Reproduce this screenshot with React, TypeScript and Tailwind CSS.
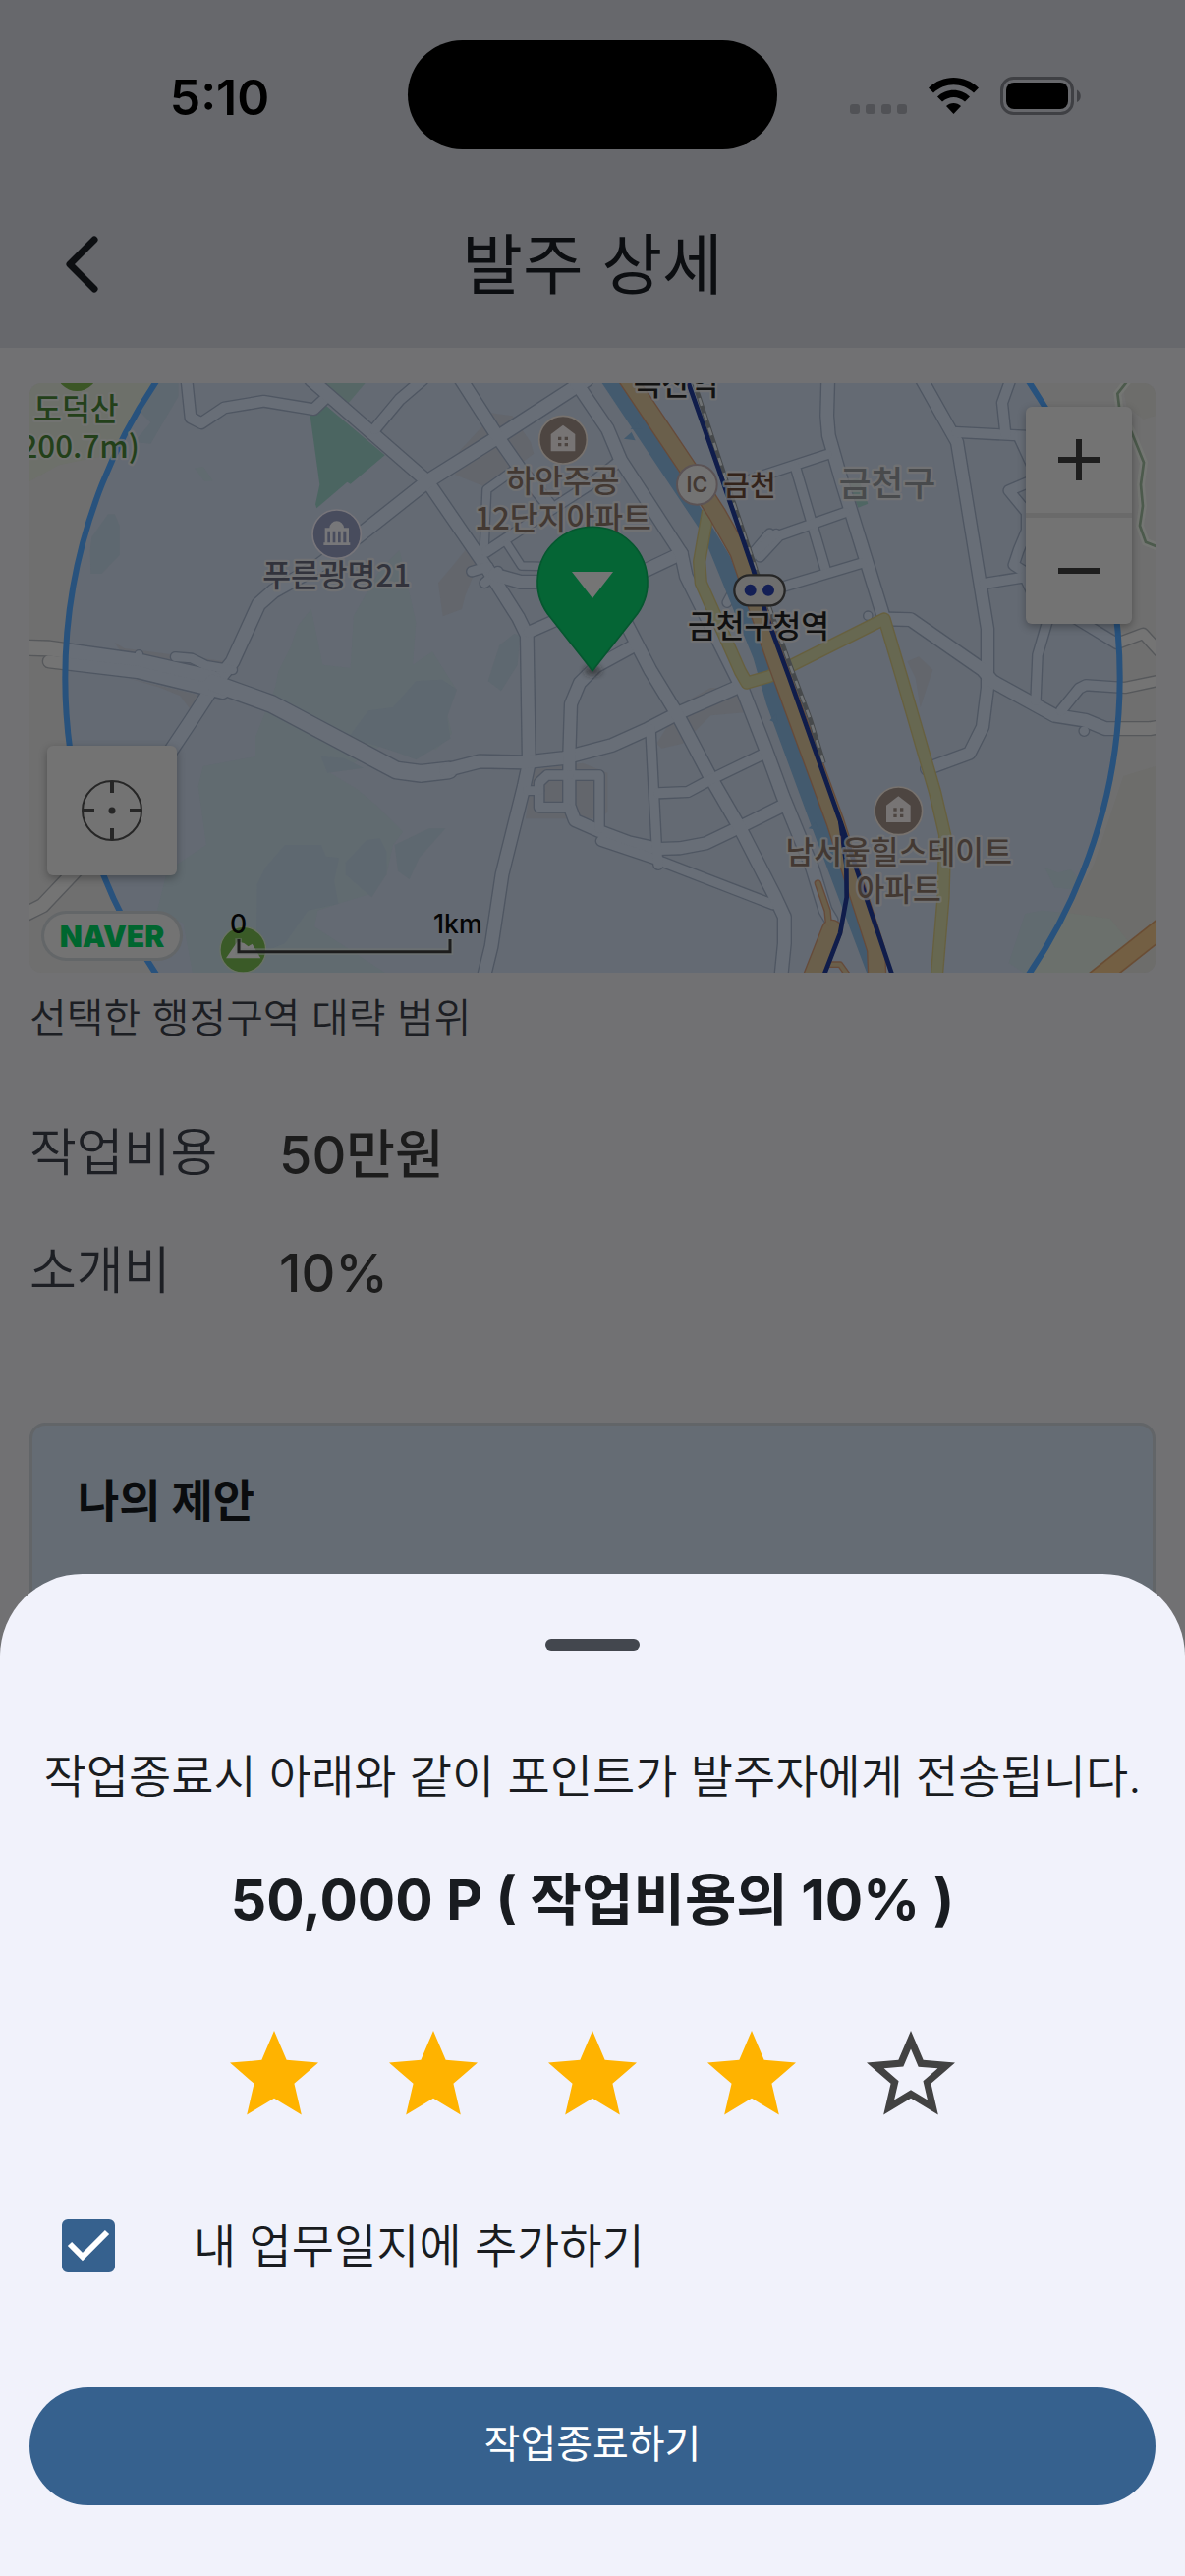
import { useState } from "react";

type Road = { d: string; w: number };

const streets: Road[] = [
  { d: "M480 20 492 135 525 152 595 105 715 85 868 110 905 75", w: 32 },
  { d: "M860 20 1215 330 1400 600 1492 745 1519 800 1521 930 1525 1190 1510 1260 1443 1530 1410 1750 1388 1840", w: 38 },
  { d: "M1200 20 1130 80 1055 170", w: 32 },
  { d: "M1700 20 1430 195 1215 330 1000 500 880 590 745 665 700 705 620 880 565 950 490 1065 390 1215 250 1400 130 1530 40 1625 -10 1650", w: 40 },
  { d: "M-10 838 60 840 330 878 560 930", w: 44 },
  { d: "M60 880 330 912 590 975", w: 36 },
  { d: "M445 866 495 870 540 892 620 905", w: 26 },
  { d: "M560 945 740 1010 1120 1212 1195 1222 1280 1212", w: 50 },
  { d: "M1270 1212 1375 1185 1510 1188 1630 1175 1780 1135 1890 1085 1980 1038 2180 950", w: 38 },
  { d: "M1318 20 1437 205 1500 295 1585 400", w: 38 },
  { d: "M1388 540 1396 355 1475 298", w: 24 },
  { d: "M1395 545 1455 505 1710 340 1805 265", w: 30 },
  { d: "M1458 520 1502 588 1600 590", w: 22 },
  { d: "M1350 605 1400 590", w: 28 },
  { d: "M1390 640 1430 605", w: 28 },
  { d: "M1420 615 1500 637 1560 637 1800 640 1990 550", w: 38 },
  { d: "M1525 790 1620 748", w: 34 },
  { d: "M1840 835 1730 895 1680 945 1653 1010 1648 1165 1648 1320 1665 1365 1740 1398 1830 1432 1920 1452 1985 1450 2065 1435 2170 1385 2310 1315", w: 36 },
  { d: "M1648 1227 1740 1227 1740 1390", w: 28 },
  { d: "M1648 1227 1580 1227 1556 1250 1556 1325 1640 1325", w: 28 },
  { d: "M1520 1274 1556 1274", w: 26 },
  { d: "M1745 1428 1915 1485 2270 1622", w: 28 },
  { d: "M1896 1085 1915 1450 1920 1500", w: 28 },
  { d: "M1820 760 1895 905 1980 1045 2080 1235 2170 1390 2275 1595 2305 1660 2305 1740 2295 1840", w: 38 },
  { d: "M1920 1282 2010 1278 2075 1243 2250 1158", w: 30 },
  { d: "M1670 30 1765 170 1805 265 1990 550 2005 620 2175 960 2245 1140 2300 1290 2390 1510 2430 1640 2448 1670", w: 38 },
  { d: "M2438 20 2435 130 2440 190 2480 330 2605 735", w: 38 },
  { d: "M2200 325 2435 248", w: 28 },
  { d: "M2338 285 2432 605", w: 28 },
  { d: "M2230 560 2290 495 2490 425", w: 28 },
  { d: "M2300 652 2540 580", w: 28 },
  { d: "M2200 560 2260 490", w: 28 },
  { d: "M2130 700 2210 550 2280 490", w: 26 },
  { d: "M2725 20 2832 210 2925 780 2925 960 2910 1080 2870 1160 2740 1208", w: 36 },
  { d: "M2830 180 3060 192", w: 30 },
  { d: "M2995 20 2970 90 2980 185", w: 30 },
  { d: "M3020 192 3065 290", w: 30 },
  { d: "M3080 320 2990 358 3045 425 3045 480 3020 540 3005 585 3060 620", w: 30 },
  { d: "M2915 642 3040 622 3085 720", w: 30 },
  { d: "M2620 750 2690 752 2910 905 2940 940 3130 1045 3225 1060 3285 1085 3420 1085 3450 1080", w: 38 },
  { d: "M3110 750 3078 860 3072 1000", w: 28 },
  { d: "M3150 1030 3205 962 3225 952 3345 960 3450 938", w: 30 },
  { d: "M3180 740 3320 825 3400 795 3450 850", w: 30 },
];

const cityPatches = [
  "M1310 240 1380 165 1405 120 1475 130 1530 210 1540 245 1500 275 1450 310 1400 350 1300 310Z",
  "M1248 640 1290 590 1335 535 1370 580 1330 680 1320 720 1262 742Z",
  "M1515 1360 1535 1210 1690 1190 1765 1220 1765 1340 1740 1360Z",
  "M1915 1130 1990 1010 2080 960 2180 960 2190 1035 2080 1045 1995 1130 1930 1145Z",
  "M2680 880 2715 865 2758 905 2720 1020 2705 930Z",
  "M260 822 290 840 600 880 640 900 520 940 330 930ZM300 930 400 960 460 985 490 1025 530 985Z",
];

const hills = [
  "M860 720 820 770 800 830 760 910 750 960 690 1110 690 1170 530 1200 515 1260 540 1440 480 1480 420 1520 390 1640 470 1680 500 1840 1100 1840 870 1690 880 1640 940 1620 1040 1590 1090 1530 1110 1440 1140 1400 1060 1320 1000 1270 900 1210 990 1190 1130 1100 1240 1150 1290 1100 1270 1020 1300 960 1230 850 1170 890 1180 760 1130 540 1070 600 990 740 980 900 895 890Z",
  "M505 290 530 285 560 328 535 330Z",
  "M3050 1840 2990 1800 3040 1650 3090 1640 3190 1650 3300 1665 3390 1780 3300 1840Z",
  "M3100 1510 3140 1525 3180 1515 3210 1550 3180 1575 3130 1570Z",
];

const darkHills = [
  "M185 540 190 500 240 430 260 430 275 465 275 555 220 612 187 612Z",
  "M370 150 330 110 385 30 455 30 455 70 370 215 320 210Z",
  "M695 1560 720 1510 780 1440 890 1440 905 1475 945 1480 930 1550 943 1620 850 1640 780 1740 720 1765 693 1740Z",
  "M965 1495 1030 1425 1070 1420 1090 1460 1090 1530 1045 1600 965 1530Z",
  "M1115 1440 1220 1390 1270 1390 1190 1480 1160 1545 1125 1520Z",
  "M975 1110 1035 1030 1110 1020 1180 940 1260 935 1305 965 1275 1050 1285 1115 1180 1180 1130 1160Z",
  "M890 1170 960 1175 1020 1205 910 1220Z",
  "M1400 940 1435 830 1480 795 1498 800 1490 890 1440 970Z",
];

function Streets() {
  return (
    <g fill="none" strokeLinejoin="round" strokeLinecap="round">
      {streets.map((r) => (
        <path key={r.d} d={r.d} stroke="#56585b" strokeWidth={r.w + 8} />
      ))}
      <circle cx="334" cy="858" r="13" fill="#747474" stroke="#56585b" strokeWidth="4" />
      <circle cx="2560" cy="740" r="14" fill="#747474" stroke="#56585b" strokeWidth="4" />
      <circle cx="3220" cy="1092" r="16" fill="#747474" stroke="#56585b" strokeWidth="4" />
      {streets.map((r) => (
        <path key={r.d} d={r.d} stroke="#747474" strokeWidth={r.w} />
      ))}
    </g>
  );
}

function HousePin({ x, y }: { x: number; y: number }) {
  return (
    <g transform={`translate(${x} ${y})`}>
      <circle r="73" fill="#4d4541" stroke="#77726e" strokeWidth="5" />
      <path d="M-37 35V-17L0 -45 37 -17V35Z" fill="#777474" />
      <path d="M-15 -9h10v10h-10zM5 -9h10v10h-10zM-15 10h10v10h-10zM5 10h10v10h-10z" fill="#4d4541" />
    </g>
  );
}

function MapDrawing() {
  return (
    <svg viewBox="0 30 3438 1800" preserveAspectRatio="xMidYMid slice" className="block h-[600px] w-full" role="img" aria-label="선택한 행정구역 지도">
      <defs>
        <filter id="pinShadow" x="-50%" y="-50%" width="200%" height="200%">
          <feGaussianBlur stdDeviation="9" />
        </filter>
      </defs>
      <rect x="-200" y="0" width="3900" height="1900" fill="#6f6f6f" />
      <path d="M0 0H400L300 160 240 250 90 280 0 330Z" fill="#6d706a" />
      <path d="M3330 0H3438V130L3400 140 3350 100ZM3340 1230 3438 1200V1830H3050L3250 1500Z" fill="#6d6d6b" />
      {cityPatches.map((d) => (
        <path key={d} d={d} fill="#6e6a67" />
      ))}
      {hills.map((d) => (
        <path key={d} d={d} fill="#6b706c" />
      ))}
      {darkHills.map((d) => (
        <path key={d} d={d} fill="#686d6b" />
      ))}
      <path d="M857 130 905 98 1085 250 980 338 970 332 877 412 873 400 886 340Z" fill="#52695a" />
      <path d="M895 30H1025L970 95Z" fill="#5f6c60" />
      <path d="M2500 330 2530 320 2560 398 2530 410Z" fill="#566a5c" />
      <Streets />
      <circle cx="1719" cy="930" r="1610" fill="#2a508a" fillOpacity="0.15" />

      <path d="M1728 0 2055 490 2210 870 2250 1010 2390 1390 2560 1840H2610L2460 1450 2290 960 2140 560 1800 0Z" fill="#435a6e" />
      <path d="M1835 170 1855 148 1870 170ZM1815 200 1838 180 1850 205ZM2260 1060 2280 1040 2285 1070ZM2378 1390 2400 1370 2410 1395Z" fill="#435a6e" />

      <g fill="none" strokeLinejoin="round">
        <path d="M2072 420 2045 575 2050 640 2170 910 2190 945 2260 925 2330 890 2610 750 2665 935 2765 1280 2795 1410 2790 1600 2770 1840" stroke="#67603f" strokeWidth="40" />
        <path d="M2072 420 2045 575 2050 640 2170 910 2190 945 2260 925 2330 890 2610 750 2665 935 2765 1280 2795 1410 2790 1600 2770 1840" stroke="#676851" strokeWidth="32" />
        <path d="M1815 0 2010 290 2100 430 2165 545 2280 880 2460 1370 2585 1760 2588 1840" stroke="#664b3a" strokeWidth="58" />
        <path d="M2395 1840 2450 1700" stroke="#664b3a" strokeWidth="66" strokeLinecap="round" />
        <path d="M2440 1680 2436 1640 2407 1557" stroke="#664b3a" strokeWidth="22" strokeLinecap="round" />
        <path d="M2440 1805 2475 1805 2500 1840" stroke="#664b3a" strokeWidth="20" />
        <path d="M1815 0 2010 290 2100 430 2165 545 2280 880 2460 1370 2585 1760 2588 1840" stroke="#6a5f4b" strokeWidth="50" />
        <path d="M2395 1840 2450 1700" stroke="#6a5f4b" strokeWidth="58" strokeLinecap="round" />
        <path d="M2440 1680 2436 1640 2407 1557" stroke="#6a5f4b" strokeWidth="14" strokeLinecap="round" />
        <path d="M2440 1805 2475 1805 2500 1840" stroke="#6a5f4b" strokeWidth="12" />
        <path d="M3480 1675 3240 1865" stroke="#6a4d34" strokeWidth="62" />
        <path d="M3480 1675 3240 1865" stroke="#735f43" strokeWidth="52" />
        <path d="M2030 30 2115 290 2218 600 2318 880 2385 1060 2425 1190" stroke="#46494b" strokeWidth="14" />
        <path d="M2030 30 2115 290 2218 600 2318 880 2385 1060 2425 1190" stroke="#6f7274" strokeWidth="8" strokeDasharray="24 24" />
        <path d="M2012 30 2110 310 2210 600 2250 740 2320 930 2480 1380 2635 1840" stroke="#101d4b" strokeWidth="14" />
        <path d="M2476 1370 2494 1500 2495 1600 2475 1710 2425 1840" stroke="#101d4b" strokeWidth="14" />
      </g>
      <path d="M3355 20 3322 62 3328 110 3365 180 3402 272 3393 340 3399 405 3390 465 3408 515 3445 530" fill="none" stroke="#747673" strokeWidth="24" />
      <path d="M3355 20 3322 62 3328 110 3365 180 3402 272 3393 340 3399 405 3390 465 3408 515 3445 530" fill="none" stroke="#4c5a4c" strokeWidth="8" />
      <circle cx="1719" cy="930" r="1610" fill="none" stroke="#28527d" strokeWidth="18" />

      <circle cx="145" cy="-10" r="64" fill="#3b5626" />
      <circle cx="938" cy="491" r="74" fill="#484c5d" stroke="#77757a" strokeWidth="5" />
      <path d="M898 517h81v8h-81zM902 472h73v10h-73zM916 472a22 21 0 0 1 44 0zM902 480h8v37h-8zM918 480h8v37h-8zM934 480h8v37h-8zM950 480h8v37h-8zM967 480h8v37h-8z" fill="#777779" />
      <HousePin x={1629} y={203} />
      <HousePin x={2653} y={1336} />

      <g
        fontFamily="'Noto Sans CJK KR', sans-serif"
        fontSize="94"
        fontWeight="500"
        textAnchor="middle"
        stroke="#747474"
        strokeOpacity="0.75"
        strokeWidth="14"
        strokeLinejoin="round"
        style={{ paintOrder: "stroke" }}
      >
        <text x="142" y="144" fill="#23401a">도덕산</text>
        <text x="137" y="258" fill="#23401a">(200.7m)</text>
        <text x="938" y="652" fill="#32333c">푸른광명21</text>
        <text x="1629" y="364" fill="#433933">하안주공</text>
        <text x="1629" y="477" fill="#433933">12단지아파트</text>
        <text x="1974" y="66" fill="#121212">독산역</text>
        <text x="2199" y="375" fontSize="87" fill="#33231a">금천</text>
        <text x="2619" y="376" fontSize="107" fill="#484a4c">금천구</text>
        <text x="2226" y="808" fill="#101010">금천구청역</text>
        <text x="2654" y="1497" fill="#433933">남서울힐스테이트</text>
        <text x="2654" y="1610" fill="#433933">아파트</text>
      </g>

      <circle cx="2038" cy="340" r="61" fill="#737373" stroke="#5b5355" strokeWidth="6" />
      <text x="2038" y="363" fontFamily="Inter, sans-serif" fontSize="64" fontWeight="600" textAnchor="middle" fill="#433933">IC</text>

      <rect x="2152" y="616" width="154" height="93" rx="46" fill="#6e6e6e" stroke="#262626" strokeWidth="7" />
      <circle cx="2201" cy="662" r="18" fill="#141f55" />
      <circle cx="2256" cy="662" r="18" fill="#141f55" />

      <ellipse cx="1720" cy="908" rx="26" ry="13" fill="#222" fillOpacity="0.7" filter="url(#pinShadow)" />
      <path d="M1719 908 1582 734A168 168 0 1 1 1856 734Z" fill="#056535" stroke="#05572f" strokeWidth="5" strokeLinejoin="round" />
      <path d="M1656 606H1782L1719 687Z" fill="#757575" />

      <circle cx="652" cy="1760" r="70" fill="#3a5a27" stroke="#697265" strokeWidth="4" />
      <path d="M600 1786 635 1735 655 1740 668 1750 680 1742 706 1786Z" fill="#777" />
      <path d="M638 1726V1766H1284V1726" fill="none" stroke="#6f7472" strokeWidth="20" strokeOpacity="0.6" />
      <path d="M639 1728V1766H1284V1728" fill="none" stroke="#1d1d1d" strokeWidth="9" />
      <g fontFamily="Inter, sans-serif" fontSize="80" fontWeight="500" fill="#050505">
        <text x="638" y="1711" textAnchor="middle">0</text>
        <text x="1382" y="1711" textAnchor="end">1km</text>
      </g>
    </svg>
  );
}

function StatusBar() {
  return (
    <div className="grid grid-cols-[1fr_376px_1fr] items-center pt-[41px]">
      <span className="pt-1 pl-8 text-center font-[Inter,sans-serif] text-[50px] leading-none font-semibold text-black">5:10</span>
      <div className="h-[111px] rounded-full bg-black" />
      <div className="flex items-center pl-[74px]">
        <svg viewBox="0 0 235 40" className="h-10 w-[235px]" aria-hidden="true">
          <g fill="#515256">
            <rect x="0" y="29" width="10" height="10" rx="3" />
            <rect x="16" y="29" width="10" height="10" rx="3" />
            <rect x="32" y="29" width="10" height="10" rx="3" />
            <rect x="48" y="29" width="10" height="10" rx="3" />
          </g>
          <path d="M80 12.500C94 -1.500 117 -1.500 131 12.500L126 17.500C114 6.500 97 6.500 85 17.500ZM89 21.500C98 12.500 113 12.500 122 21.500L117 26.500C110 20.500 101 20.500 94 26.500ZM98 31C102 27 109 27 113 31L105.500 39Z" fill="#000" />
          <rect x="154.500" y="2.500" width="72" height="36" rx="12" fill="none" stroke="#3f4044" strokeWidth="3" />
          <rect x="159" y="7" width="63" height="27" rx="8" fill="#000" />
          <path d="M231 14.500C236 17 236 25 231 27Z" fill="#3f4044" />
        </svg>
      </div>
    </div>
  );
}

const STAR = "M12 17.27 18.18 21l-1.640-7.030L22 9.240l-7.190-.610L12 2 9.190 8.630 2 9.240l5.460 4.730L5.820 21z";
const STAR_OUTLINE =
  "M22 9.240l-7.190-.620L12 2 9.190 8.630 2 9.240l5.460 4.730L5.820 21 12 17.270 18.180 21l-1.630-7.030L22 9.240zM12 15.400l-3.760 2.270 1-4.280-3.320-2.880 4.380-.380L12 6.100l1.710 4.040 4.380.380-3.320 2.880 1 4.280L12 15.400z";

const details = [
  { label: "작업비용", value: "50만원" },
  { label: "소개비", value: "10%" },
];

export default function App() {
  const [rating, setRating] = useState(4);
  const [checked, setChecked] = useState(true);

  return (
    <div className="min-h-screen bg-[#717173] font-[Inter,'Noto_Sans_CJK_KR',sans-serif] text-[#191c20]">
      <header className="h-[354px] bg-[#67686c]">
        <StatusBar />
        <div className="grid grid-cols-[180px_1fr_180px] items-center pt-[70px]">
          <button type="button" aria-label="뒤로" className="ml-12 flex size-[72px] items-center justify-center">
            <svg viewBox="0 0 72 72" className="size-[72px]" fill="none" stroke="#0d0f12" strokeWidth="7" strokeLinecap="round" strokeLinejoin="round">
              <path d="M48 10 23 35 48 60" />
            </svg>
          </button>
          <h1 className="text-center text-[67px] leading-24 font-normal text-[#0c0e11]">발주 상세</h1>
        </div>
      </header>

      <main className="px-[30px] pt-9">
        <div className="relative overflow-hidden rounded-xl">
          <MapDrawing />
          <div className="absolute top-6 right-6 flex w-[108px] flex-col rounded-md bg-[#737373] shadow-[0_3px_9px_rgba(0,0,0,0.3)]">
            <button type="button" aria-label="확대" className="flex h-[108px] items-center justify-center">
              <svg viewBox="0 0 42 42" className="size-[42px]" stroke="#1e1e1e" strokeWidth="6">
                <path d="M21 0V42M0 21H42" />
              </svg>
            </button>
            <div className="h-[5px] bg-[#6a6a6a]" />
            <button type="button" aria-label="축소" className="flex h-[108px] items-center justify-center">
              <svg viewBox="0 0 42 42" className="size-[42px]" stroke="#1e1e1e" strokeWidth="6">
                <path d="M0 21H42" />
              </svg>
            </button>
          </div>
          <div className="absolute bottom-[15px] left-[15px] flex flex-col items-start gap-[39px]">
            <button type="button" aria-label="현재 위치" className="ml-[3px] flex size-[132px] items-center justify-center rounded-md bg-[#737373] shadow-[0_3px_9px_rgba(0,0,0,0.3)]">
              <svg viewBox="0 0 62 62" className="size-[62px]" fill="none" stroke="#262626">
                <circle cx="31" cy="31" r="30" strokeWidth="2" />
                <path d="M31 2V13M31 49V60M2 31H13M49 31H60" strokeWidth="4" />
                <circle cx="31" cy="31" r="3.500" fill="#262626" stroke="none" />
              </svg>
            </button>
            <span className="flex h-[45px] w-[138px] items-center justify-center rounded-full bg-[#737373] text-[30px] leading-none font-black text-[#00662f] ring-3 ring-[#636668]">
              NAVER
            </span>
          </div>
        </div>

        <p className="mt-[14px] text-[41px] leading-16 font-[350] text-[#1c1e23]">선택한 행정구역 대략 범위</p>

        <dl className="mt-16 flex flex-col gap-9">
          {details.map((row) => (
            <div key={row.label} className="grid grid-cols-[254px_1fr] items-center">
              <dt className="text-[52px] leading-20 font-[350] text-[#1d1f24]">{row.label}</dt>
              <dd className="pt-1 text-[54px] leading-20 font-medium text-[#1c1c1c]">{row.value}</dd>
            </div>
          ))}
        </dl>

        <section className="mt-28 h-[400px] rounded-2xl border-3 border-[#626568] bg-[#656c74] px-[46px] pt-11">
          <h2 className="text-[46px] leading-16 font-bold text-[#0a0c0e]">나의 제안</h2>
        </section>
      </main>

      <div role="dialog" aria-label="작업종료" className="fixed inset-x-0 bottom-0 flex flex-col items-center rounded-t-[84px] bg-[#f1f2fb] px-[30px] pb-18">
        <div className="mt-[66px] h-3 w-24 rounded-full bg-[#43474e]" />
        <p className="mt-24 text-center text-[47px] leading-16 font-[350] whitespace-nowrap">
          작업종료시 아래와 같이 포인트가 발주자에게 전송됩니다.
        </p>
        <p className="mt-[54px] text-center text-[57px] leading-20 font-bold whitespace-nowrap">50,000 P ( 작업비용의 10% )</p>
        <div className="mt-21 flex gap-[54px]">
          {[1, 2, 3, 4, 5].map((n) => (
            <button key={n} type="button" aria-label={`별점 ${n}점`} aria-pressed={n <= rating} onClick={() => setRating(n)}>
              <svg viewBox="0 0 24 24" className="block size-[108px]">
                {n <= rating ? <path d={STAR} fill="#ffb300" /> : <path d={STAR_OUTLINE} fill="#424242" />}
              </svg>
            </button>
          ))}
        </div>
        <label className="mt-[88px] flex items-center gap-20 self-stretch pl-[33px]">
          <span className="relative flex size-[54px]">
            <input
              type="checkbox"
              checked={checked}
              onChange={(e) => setChecked(e.target.checked)}
              className="peer size-[54px] appearance-none rounded-md border-6 border-[#36618e] checked:bg-[#36618e]"
            />
            <svg viewBox="0 0 54 54" className="pointer-events-none absolute inset-0 hidden size-[54px] peer-checked:block" fill="none" stroke="#fff" strokeWidth="6">
              <path d="M8 25 21 38 46 13" />
            </svg>
          </span>
          <span className="text-[47px] leading-16 font-[350]">내 업무일지에 추가하기</span>
        </label>
        <button type="button" className="mt-28 h-30 self-stretch rounded-full bg-[#36618e] pb-1 text-[40px] font-normal text-white">
          작업종료하기
        </button>
      </div>
    </div>
  );
}
